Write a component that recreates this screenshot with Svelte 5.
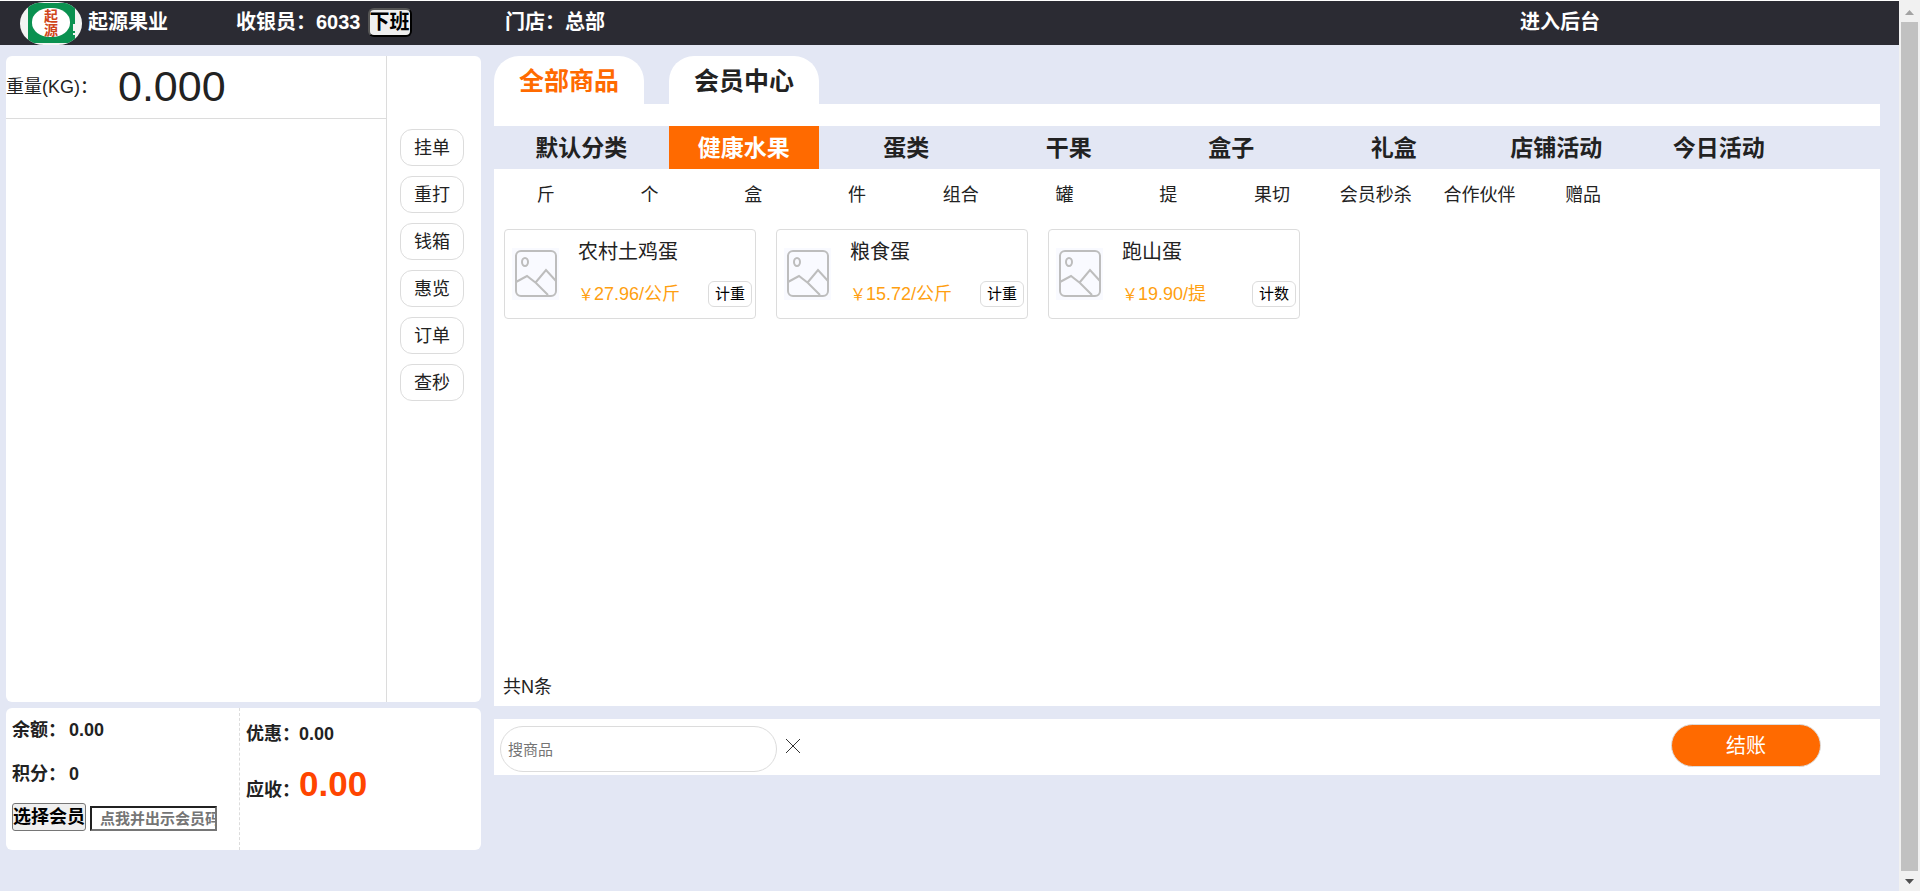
<script>
  const actions = ['挂单', '重打', '钱箱', '惠览', '订单', '查秒'];
  const tabs = ['全部商品', '会员中心'];
  const categories = ['默认分类', '健康水果', '蛋类', '干果', '盒子', '礼盒', '店铺活动', '今日活动'];
  const units = ['斤', '个', '盒', '件', '组合', '罐', '提', '果切', '会员秒杀', '合作伙伴', '赠品'];
  const products = [
    { name: '农村土鸡蛋', price: '27.96/公斤', mode: '计重' },
    { name: '粮食蛋', price: '15.72/公斤', mode: '计重' },
    { name: '跑山蛋', price: '19.90/提', mode: '计数' }
  ];
  let activeTab = $state(0);
  let activeCategory = $state(1);
  let keyword = $state('');
  let memberCode = $state('');
</script>

<div class="window">
  <div class="page">
    <header>
      <div class="brand">
        <svg class="logo" viewBox="0 0 62 43" role="img" aria-label="起源">
          <defs><clipPath id="pill"><rect width="62" height="43" rx="24" ry="21" /></clipPath></defs>
          <g clip-path="url(#pill)">
            <rect width="62" height="43" fill="#f3f4f3" />
            <rect x="8" y="1" width="47" height="40" fill="#0a9150" />
            <rect x="12" y="6" width="38" height="29" rx="18" ry="14" fill="#fff" />
            <path d="M54 22v7M54 31v2" stroke="#f3f4f3" stroke-width="2" />
            <g fill="#d0451b" font-weight="700" font-size="14" text-anchor="middle">
              <text x="31" y="19">起</text>
              <text x="31" y="33">源</text>
            </g>
          </g>
        </svg>
        <span>起源果业</span>
      </div>
      <div class="cashier">
        <span>收银员：6033</span>
        <button class="off-duty">下班</button>
      </div>
      <div class="store">门店：总部</div>
      <a class="backend" href="#backend">进入后台</a>
    </header>

    <main>
      <section class="left">
        <div class="card order">
          <div class="cart">
            <div class="weight"><span>重量(KG)：</span><output>0.000</output></div>
          </div>
          <div class="actions">
            {#each actions as a}<button>{a}</button>{/each}
          </div>
        </div>
        <div class="card totals">
          <div class="member">
            <p><span>余额：</span><b>0.00</b></p>
            <p><span>积分：</span><b>0</b></p>
            <div class="pick">
              <button>选择会员</button>
              <input type="text" aria-label="会员码" placeholder="点我并出示会员码" bind:value={memberCode} />
            </div>
          </div>
          <div class="sum">
            <p><span>优惠：</span><b>0.00</b></p>
            <p class="due"><span>应收：</span><b>0.00</b></p>
          </div>
        </div>
      </section>

      <section class="right">
        <nav class="tabs">
          {#each tabs as t, i}
            <button class:active={activeTab === i} onclick={() => (activeTab = i)}>{t}</button>
          {/each}
        </nav>
        <div class="strip"></div>
        <nav class="categories">
          {#each categories as c, i}
            <button class:active={activeCategory === i} onclick={() => (activeCategory = i)}>{c}</button>
          {/each}
        </nav>
        <div class="goods">
          <nav class="units">
            {#each units as u}<button>{u}</button>{/each}
          </nav>
          <div class="products">
            {#each products as p}
              <article>
                <svg class="thumb" viewBox="0 0 47 52" aria-hidden="true">
                  <rect width="47" height="52" fill="#f9faff" />
                  <g fill="none" stroke="#bdbdbd" stroke-width="2">
                    <rect x="4" y="3" width="40" height="45" rx="5" />
                    <ellipse cx="13" cy="14" rx="3" ry="4" />
                    <path d="M4 34l11-6 9 7 12 12M24 34l10-12 10 11" />
                  </g>
                </svg>
                <div class="info">
                  <h3>{p.name}</h3>
                  <div class="line">
                    <span class="price"><span class="yen">￥</span>{p.price}</span>
                    <button>{p.mode}</button>
                  </div>
                </div>
              </article>
            {/each}
          </div>
          <div class="count">共N条</div>
        </div>
        <div class="search">
          <input type="text" aria-label="搜商品" placeholder="搜商品" bind:value={keyword} />
          <button class="clear" aria-label="清空" onclick={() => (keyword = '')}>
            <svg viewBox="0 0 16 16" aria-hidden="true"><path d="M1 1l14 14M15 1L1 15" stroke="#333" fill="none" /></svg>
          </button>
          <button class="pay">结账</button>
        </div>
      </section>
    </main>
  </div>

  <div class="scroll" aria-hidden="true">
    <svg viewBox="0 0 21 22"><path d="M6 15l4.500-5 4.500 5z" fill="#a3a3a3" /></svg>
    <div class="thumb-bar"></div>
    <svg viewBox="0 0 21 20"><path d="M6 8l4.500 5 4.500-5z" fill="#505050" /></svg>
  </div>
</div>

<style>
  :global(body) {
    margin: 0;
    background: #e3e7f4;
  }
  * {
    box-sizing: border-box;
  }
  .window {
    display: flex;
    min-height: 100vh;
    color: #222;
    font-family: 'Liberation Sans', 'Noto Sans CJK SC', sans-serif;
    font-size: 18px;
    font-weight: 400;
    line-height: 24px;
  }
  button,
  input {
    font-family: inherit;
    font-size: inherit;
    font-weight: inherit;
    line-height: inherit;
    color: inherit;
    margin: 0;
    padding: 0;
  }
  button {
    background: none;
    border: 0;
    white-space: nowrap;
    cursor: pointer;
  }
  p,
  h3 {
    margin: 0;
    font-weight: inherit;
  }
  .page {
    flex: 1;
    min-width: 0;
    display: flex;
    flex-direction: column;
  }

  header {
    display: flex;
    height: 45px;
    padding: 0 299px 2px 20px;
    align-items: center;
    border-top: 1px solid #fff;
    background: #2b2b33;
    color: #fff;
    font-size: 20px;
    font-weight: 700;
  }
  .brand {
    display: flex;
    align-items: center;
    gap: 6px;
    width: 216px;
  }
  .logo {
    width: 62px;
    height: 43px;
    margin-bottom: -2px;
  }
  .cashier {
    display: flex;
    align-items: center;
    gap: 7px;
    width: 269px;
  }
  .off-duty {
    height: 29px;
    border: 2px outset #000;
    border-radius: 6px;
    background: #efefef;
    color: #000;
  }
  .backend {
    margin-left: auto;
    color: inherit;
    text-decoration: none;
  }

  main {
    flex: 1;
    display: flex;
    gap: 13px;
    padding: 11px 19px 0 6px;
  }
  .left {
    flex: 0 0 475px;
    display: flex;
    flex-direction: column;
    gap: 6px;
    padding-bottom: 41px;
  }
  .card {
    display: flex;
    border-radius: 6px;
    background: #fff;
  }
  .order {
    flex: 1;
  }
  .cart {
    flex: 1;
    border-right: 1px solid #dcdcdc;
  }
  .weight {
    display: flex;
    align-items: center;
    height: 63px;
    border-bottom: 1px solid #dcdcdc;
  }
  .weight span {
    width: 112px;
  }
  .weight output {
    padding-bottom: 3px;
    font-size: 43px;
    line-height: 56px;
  }
  .actions {
    display: flex;
    flex-direction: column;
    gap: 10px;
    width: 94px;
    padding: 73px 0 0 13px;
  }
  .actions button {
    width: 64px;
    height: 37px;
    border: 1px solid #dcdcdc;
    border-radius: 12px;
  }
  .totals {
    height: 142px;
    font-weight: 700;
  }
  .member {
    display: flex;
    flex-direction: column;
    gap: 20px;
    width: 234px;
    padding: 10px 0 0 6px;
    border-right: 1px dashed #dcdcdc;
  }
  .member p {
    display: flex;
    gap: 3px;
  }
  .pick {
    display: flex;
    align-items: flex-end;
    gap: 4px;
    height: 25px;
  }
  .member b,
  .sum b {
    font-weight: 700;
  }
  .pick button {
    height: 28px;
    border: 1px solid #767676;
    border-radius: 3px;
    background: #efefef;
    color: #000;
  }
  .pick input {
    width: 127px;
    height: 25px;
    padding: 0 0 0 8px;
    border: 2px inset #767676;
    background: #fff;
    font-size: 15px;
  }
  .sum {
    display: flex;
    flex-direction: column;
    gap: 18px;
    padding: 14px 0 0 6px;
  }
  .sum p {
    display: flex;
    align-items: baseline;
  }
  .sum span {
    width: 53px;
    white-space: nowrap;
  }
  .due b {
    color: #ff4500;
    font-size: 35px;
    line-height: 40px;
  }

  .right {
    flex: 1;
    min-width: 0;
    display: flex;
    flex-direction: column;
    padding-bottom: 116px;
  }
  .tabs {
    display: flex;
    gap: 25px;
  }
  .tabs button {
    width: 150px;
    height: 48px;
    padding-top: 2px;
    border-radius: 25px 25px 0 0;
    background: #fff;
    font-size: 25px;
    font-weight: 700;
  }
  .tabs .active {
    color: #ff6a00;
  }
  .strip {
    height: 22px;
    background: #fff;
  }
  .categories {
    display: grid;
    grid-template-columns: repeat(8, 1fr);
    justify-items: center;
    padding: 0 80px 0 6px;
  }
  .categories button {
    width: 150px;
    height: 43px;
    font-size: 23px;
    font-weight: 700;
  }
  .categories .active {
    background: #ff6a00;
    color: #fff;
  }
  .goods {
    flex: 1;
    display: flex;
    flex-direction: column;
    background: #fff;
  }
  .units {
    display: grid;
    grid-template-columns: repeat(11, 1fr);
    height: 50px;
    padding: 1px 245px 0 0;
  }
  .products {
    display: flex;
    flex-wrap: wrap;
    gap: 20px;
    padding: 10px;
  }
  article {
    display: flex;
    width: 252px;
    height: 90px;
    padding: 0 3px 0 7px;
    border: 1px solid #dcdcdc;
    border-radius: 4px;
  }
  .thumb {
    width: 47px;
    height: 52px;
    margin-top: 18px;
  }
  .info {
    flex: 1;
    padding: 10px 0 0 19px;
  }
  h3 {
    font-size: 20px;
  }
  .line {
    display: flex;
    justify-content: space-between;
    align-items: center;
    margin-top: 16px;
  }
  .price {
    padding-top: 2px;
    color: #ffa010;
    white-space: nowrap;
  }
  .yen {
    font-size: 16px;
  }
  .line button {
    width: 44px;
    height: 26px;
    border: 1px solid #dcdcdc;
    border-radius: 6px;
    color: #000;
    font-size: 15px;
  }
  .count {
    margin-top: auto;
    padding: 0 9px 7px;
  }
  .search {
    display: flex;
    align-items: flex-start;
    height: 56px;
    margin-top: 13px;
    padding: 5px 59px 0 6px;
    background: #fff;
  }
  .search input {
    width: 277px;
    height: 46px;
    margin-top: 2px;
    padding: 0 7px;
    border: 1px solid #dcdcdc;
    border-radius: 23px;
    font-size: 15px;
  }
  .clear {
    display: flex;
    margin: 14px 0 0 8px;
  }
  .clear svg {
    width: 16px;
    height: 16px;
  }
  .pay {
    width: 150px;
    height: 43px;
    margin-left: auto;
    border: 1px solid #dcdcdc;
    border-radius: 22px;
    background: #ff6a00;
    color: #fff;
    font-size: 20px;
  }
  ::placeholder {
    color: #757575;
    opacity: 1;
  }

  .scroll {
    display: flex;
    flex-direction: column;
    width: 21px;
    background: #f1f1f1;
  }
  .scroll svg {
    display: block;
    width: 21px;
  }
  .thumb-bar {
    flex: 1;
    margin: 0 2px;
    background: #c1c1c1;
  }
</style>
